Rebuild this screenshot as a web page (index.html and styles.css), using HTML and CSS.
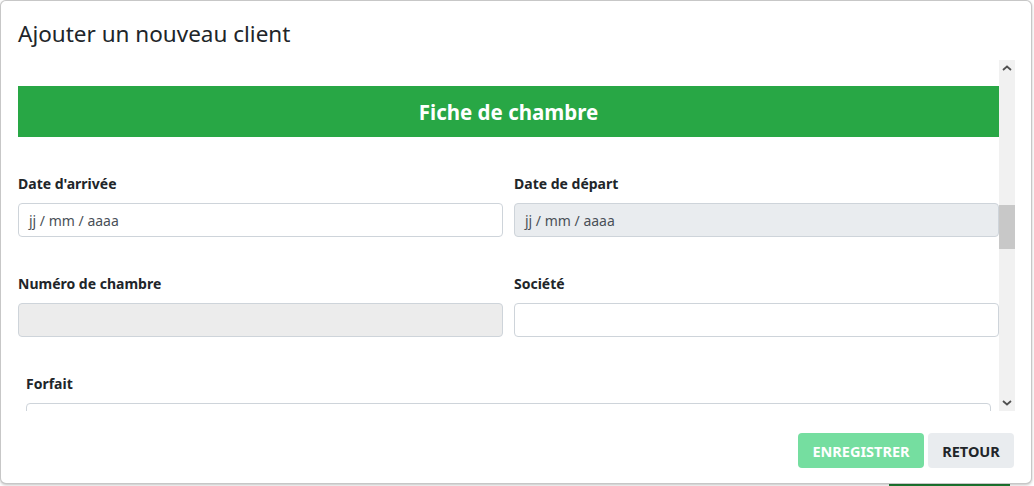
FILE: index.html
```html
<!DOCTYPE html>
<html lang="fr">
<head>
<meta charset="utf-8">
<title>Ajouter un nouveau client</title>
<link rel="stylesheet" href="styles.css">
</head>
<body>
<div class="behind-btn"></div>
<div class="modal">
  <div class="modal-header">
    <h5 class="modal-title">Ajouter un nouveau client</h5>
  </div>
  <div class="modal-body">
    <div class="scroll-content">
      <div class="banner">Fiche de chambre</div>
      <div class="row">
        <div class="field">
          <label class="label">Date d'arrivée</label>
          <div class="input"><span class="ph">jj / mm / aaaa</span></div>
        </div>
        <div class="field">
          <label class="label">Date de départ</label>
          <div class="input disabled"><span class="ph">jj / mm / aaaa</span></div>
        </div>
      </div>
      <div class="row">
        <div class="field">
          <label class="label">Numéro de chambre</label>
          <div class="input readonly"></div>
        </div>
        <div class="field">
          <label class="label">Société</label>
          <div class="input"></div>
        </div>
      </div>
      <div class="row single">
        <div class="field">
          <label class="label">Forfait</label>
          <div class="input"></div>
        </div>
      </div>
    </div>
    <div class="scrollbar">
      <div class="arrow up"><svg width="10" height="6" viewBox="0 0 10 6"><path d="M1 5 L5 1.5 L9 5" fill="none" stroke="#505050" stroke-width="1.8"/></svg></div>
      <div class="track"><div class="thumb"></div></div>
      <div class="arrow down"><svg width="10" height="6" viewBox="0 0 10 6"><path d="M1 1 L5 4.5 L9 1" fill="none" stroke="#505050" stroke-width="1.8"/></svg></div>
    </div>
  </div>
  <div class="modal-footer">
    <button class="btn btn-save">ENREGISTRER</button>
    <button class="btn btn-back">RETOUR</button>
  </div>
</div>
</body>
</html>
```

FILE: styles.css
```css
* { box-sizing: border-box; }
html, body {
  margin: 0;
  padding: 0;
  background: #ffffff;
  font-family: "Noto Sans", "Open Sans", sans-serif;
  color: #212529;
}
body {
  width: 1034px;
  height: 486px;
  position: relative;
  overflow: hidden;
}
.behind-btn {
  position: absolute;
  left: 889px;
  top: 470px;
  width: 121px;
  height: 30px;
  background: #1e7e34;
  border-radius: 4px;
  z-index: 0;
}
.modal {
  position: relative;
  z-index: 1;
  width: 1032px;
  height: 484px;
  background: #fff;
  border: 1px solid rgba(0,0,0,0.22);
  border-radius: 6px;
  box-shadow: 0 1px 3px rgba(0,0,0,0.25);
  display: flex;
  flex-direction: column;
}
.modal-header {
  height: 59px;
  padding: 0 17px;
  display: flex;
  align-items: center;
}
.modal-title {
  margin: 0;
  font-size: 22.5px;
  font-weight: 400;
  line-height: 1.3;
  color: #212529;
  padding-top: 6px;
}
.modal-body {
  display: flex;
  height: 351px;
  padding-left: 17px;
  padding-right: 16px;
}
.scroll-content {
  flex: 1;
  overflow: hidden;
  padding-top: 26px;
}
.banner {
  height: 51px;
  background: #28a745;
  color: #fff;
  font-weight: 700;
  font-size: 20.5px;
  display: flex;
  align-items: center;
  justify-content: center;
}
.row {
  display: grid;
  grid-template-columns: 1fr 1fr;
  column-gap: 11px;
  margin-top: 36px;
}
.row.single {
  grid-template-columns: 1fr;
  padding: 0 8px;
}
.field {
  display: flex;
  flex-direction: column;
}
.label {
  font-size: 14px;
  font-weight: 700;
  line-height: 21px;
  margin-bottom: 9px;
}
.input {
  height: 34px;
  border: 1px solid #ced4da;
  border-radius: 4px;
  background: #fff;
  display: flex;
  align-items: center;
  padding-left: 10px;
}
.input.disabled { background: #e9ecef; }
.input.readonly { background: #ececec; }
.ph {
  font-size: 14px;
  color: #495057;
}
.scrollbar {
  width: 16px;
  background: #f1f1f1;
  display: flex;
  flex-direction: column;
}
.arrow {
  height: 16px;
  display: flex;
  align-items: center;
  justify-content: center;
}
.track {
  flex: 1;
  padding-top: 129px;
}
.thumb {
  height: 44px;
  background: #c8c8c8;
}
.modal-footer {
  flex: 1;
  display: flex;
  justify-content: flex-end;
  align-items: flex-start;
  padding: 22px 17px 0 0;
  gap: 4px;
}
.btn {
  height: 35px;
  border: none;
  border-radius: 4px;
  font-family: "Noto Sans", "Open Sans", sans-serif;
  font-size: 14.5px;
  font-weight: 700;
  padding: 0 10px;
}
.btn-save {
  background: #75dea0;
  color: #fff;
  width: 126px;
}
.btn-back {
  background: #e9ecef;
  color: #212529;
  width: 86px;
}
```
